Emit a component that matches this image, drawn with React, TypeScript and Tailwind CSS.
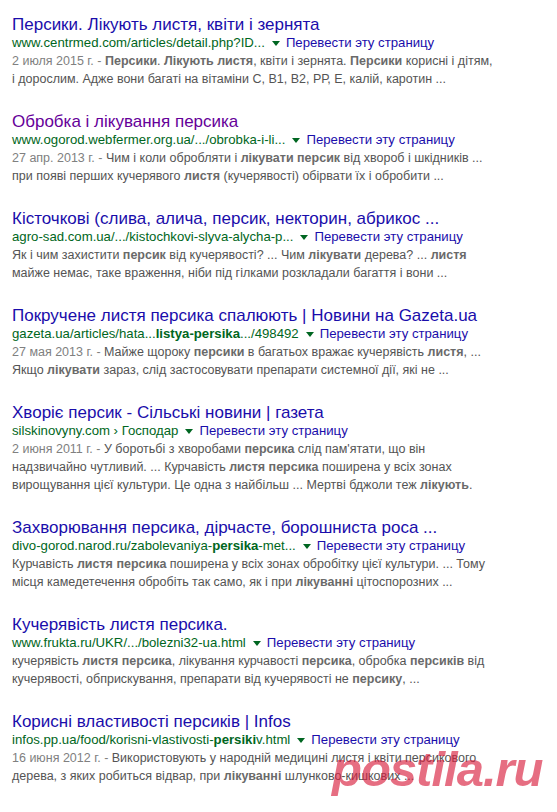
import React from 'react';

interface Result {
    title: string;
    url: string;
    visited?: boolean;
    date?: string;
    lines: string[];
}

// **text** marks the bold parts, as Google highlights the query words
const results: Result[] = [
    {
        title: 'Персики. Лікують листя, квіти і зернята',
        url: 'www.centrmed.com/articles/detail.php?ID...',
        date: '2 июля 2015 г. - ',
        lines: [
            '**Персики**. **Лікують листя**, квіти і зернята. **Персики** корисні і дітям,',
            'і дорослим. Адже вони багаті на вітаміни С, В1, В2, РР, Е, калій, каротин ...',
        ],
    },
    {
        title: 'Обробка і лікування персика',
        url: 'www.ogorod.webfermer.org.ua/.../obrobka-i-li...',
        visited: true,
        date: '27 апр. 2013 г. - ',
        lines: [
            'Чим і коли обробляти і **лікувати персик** від хвороб і шкідників ...',
            'при появі перших кучерявого **листя** (кучерявості) обірвати їх і обробити  ...',
        ],
    },
    {
        title: 'Кісточкові (слива, алича, персик, некторин, абрикос ...',
        url: 'agro-sad.com.ua/.../kistochkovi-slyva-alycha-p...',
        lines: [
            'Як і чим захистити **персик** від кучерявості? ... Чим **лікувати** дерева? ... **листя**',
            'майже немає, таке враження, ніби під гілками розкладали багаття і вони  ...',
        ],
    },
    {
        title: 'Покручене листя персика спалюють | Новини на Gazeta.ua',
        url: 'gazeta.ua/articles/hata...**listya-persika**.../498492',
        date: '27 мая 2013 г. - ',
        lines: [
            'Майже щороку **персики** в багатьох вражає кучерявість **листя**, ...',
            'Якщо **лікувати** зараз, слід застосовувати препарати системної дії, які не  ...',
        ],
    },
    {
        title: 'Хворіє персик - Сільські новини | газета',
        url: 'silskinovyny.com › Господар',
        date: '2 июня 2011 г. - ',
        lines: [
            'У боротьбі з хворобами **персика** слід пам\'ятати, що він',
            'надзвичайно чутливий. ... Курчавість **листя персика** поширена у всіх зонах',
            'вирощування цієї культури. Це одна з найбільш ... Мертві бджоли теж **лікують**.',
        ],
    },
    {
        title: 'Захворювання персика, дірчасте, борошниста роса ...',
        url: 'divo-gorod.narod.ru/zabolevaniya-**persika**-met...',
        lines: [
            'Курчавість **листя персика** поширена у всіх зонах обробітку цієї культури. ... Тому',
            'місця камедетечення обробіть так само, як і при **лікуванні** цітоспорозних  ...',
        ],
    },
    {
        title: 'Кучерявість листя персика.',
        url: 'www.frukta.ru/UKR/.../bolezni32-ua.html',
        lines: [
            'кучерявість **листя персика**, лікування курчавості **персика**, обробка **персиків** від',
            'кучерявості, обприскування, препарати від кучерявості не **персику**, ...',
        ],
    },
    {
        title: 'Корисні властивості персиків | Infos',
        url: 'infos.pp.ua/food/korisni-vlastivosti-**persiki**v.html',
        date: '16 июня 2012 г. - ',
        lines: [
            'Використовують у народній медицині листя і квіти персикового',
            'дерева, з яких робиться відвар, при **лікуванні** шлунково-кишкових  ...',
        ],
    },
    {
        title: 'Лікування кучерявості листя персика | Рідна земля ...',
        url: 'ridnazemlya.com.ua/...',
        lines: [],
    },
];

function rich(text: string, boldClass: string) {
    return text.split('**').map((part, i) =>
        i % 2 === 1 ? (
            <b key={i} className={boldClass}>
                {part}
            </b>
        ) : (
            <React.Fragment key={i}>{part}</React.Fragment>
        )
    );
}

function SearchResult({ r }: { r: Result }) {
    return (
        <div className="mb-[24px]">
            <h3
                className={`text-[17px] leading-[19px] whitespace-nowrap ${
                    r.visited ? 'text-[#660099]' : 'text-[#1a0dab]'
                }`}
            >
                {r.title}
            </h3>
            <div className="flex items-center text-[13.2px] leading-[17px] whitespace-nowrap">
                <span className="text-[#006621]">{rich(r.url, 'font-bold')}</span>
                <span className="ml-[7px] mr-[6px] mt-[1px] w-0 h-0 border-x-[4px] border-x-transparent border-t-[5px] border-t-[#006621]" />
                <span className="text-[#1a0dab]">Перевести эту страницу</span>
            </div>
            <div className="mt-[1px] text-[12.5px] leading-[18px] text-[#545454] whitespace-nowrap">
                {r.lines.map((line, i) => (
                    <div key={i}>
                        {i === 0 && r.date && <span className="text-[#808080]">{r.date}</span>}
                        {rich(line, 'font-bold text-[#6a6a6a]')}
                    </div>
                ))}
            </div>
        </div>
    );
}

export default function App() {
    return (
        <div
            className="relative h-[812px] overflow-hidden bg-white pt-[15px] pl-[12px]"
            style={{ fontFamily: '"Liberation Sans", Arial, sans-serif' }}
        >
            {results.map((r, i) => (
                <SearchResult key={i} r={r} />
            ))}

            {/* watermark of the site the picture was taken from */}
            <div className="absolute left-[332px] top-[745px] text-[49px] leading-[49px] font-bold italic tracking-[-1px] text-[rgba(216,32,63,0.65)] pointer-events-none">
                postila.ru
            </div>
        </div>
    );
}
